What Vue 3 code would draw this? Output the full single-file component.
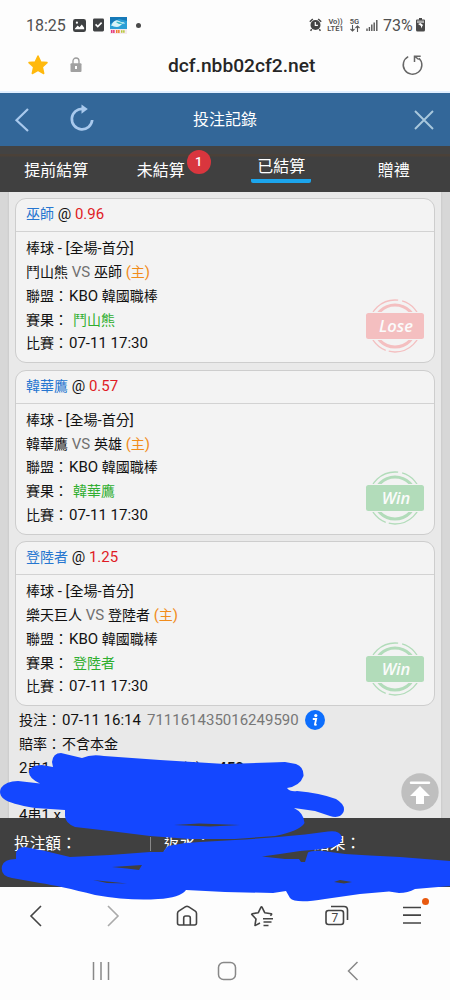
<script setup>
const tabs = [
  { label: '提前結算' },
  { label: '未結算', badge: 1 },
  { label: '已結算', active: true },
  { label: '贈禮' }
]
const bets = [
  { pick: '巫師', odds: '0.96', away: '鬥山熊', home: '巫師', result: '鬥山熊', status: 'Lose' },
  { pick: '韓華鷹', odds: '0.57', away: '韓華鷹', home: '英雄', result: '韓華鷹', status: 'Win' },
  { pick: '登陸者', odds: '1.25', away: '樂天巨人', home: '登陸者', result: '登陸者', status: 'Win' }
]
</script>

<template>
  <div class="phone">
    <div class="status">
      <span class="time">18:25</span>
      <svg class="s-img" width="13" height="13" viewBox="0 0 14 14"><rect width="14" height="14" rx="2.5" fill="#3f4143" /><path d="M2 10.5 5 7l2 2 2.5-3L12 9.5v1.5H2z" fill="#fff" /><circle cx="4.2" cy="4" r="1.2" fill="#fff" /></svg>
      <svg class="s-chk" width="11" height="14" viewBox="0 0 12 14"><rect width="12" height="14" rx="1.5" fill="#3f4143" /><path d="m2.8 6.3 2.4 2.5 4.2-4.4" fill="none" stroke="#fff" stroke-width="1.7" /></svg>
      <svg class="s-app" width="17" height="17" viewBox="0 0 17 17"><rect width="17" height="12" fill="#2c9fd6" /><path d="M0 0h17v4L9 2 0 7z" fill="#1679b8" /><path d="M1 9c2-5 5-7 8-5s5 0 6 3c-3-2-4 3-8 3S3 8 1 9z" fill="#d9f3f8" /><path d="M6 5c3-1 4 1 7 1-2 2-5 1-7-1z" fill="#38b9c6" /><rect y="12" width="17" height="5" fill="#f5e9ee" /><path d="M1 14.5h4" stroke="#e6397d" stroke-width="3" stroke-dasharray="1.5 .6" /><path d="M6 14.5h4" stroke="#f07f2d" stroke-width="3" stroke-dasharray="1.5 .6" /><path d="M11 14.5h4" stroke="#b6c936" stroke-width="2.5" stroke-dasharray="1.5 .6" /></svg>
      <i class="dot"></i>
      <span class="grow"></span>
      <svg width="13" height="14" viewBox="0 0 13 14"><circle cx="6.5" cy="7" r="5" fill="#444" /><path d="M.8 3.8 3.8 1M12.2 3.8 9.2 1M2.8 11.2l-1.3 1.5M10.2 11.2l1.3 1.5" stroke="#444" stroke-width="1.5" /><path d="M6.3 4v3.4h2.6" fill="none" stroke="#fff" stroke-width="1.2" /></svg>
      <span class="net lte"><b>Vo))</b><b>LTE1</b></span>
      <span class="net g5"><b>5G</b><svg width="10" height="7" viewBox="0 0 10 7"><path d="M2.5 0v6M.5 4l2 2 2-2M7.5 7V1M5.5 3l2-2 2 2" fill="none" stroke="#555" stroke-width="1.1" /></svg></span>
      <svg class="s-sig" width="12" height="13" viewBox="0 0 12 13"><path d="M1 12V9.5M3.4 12V8M5.8 12V5.5M8.2 12V3.5M10.8 12V1" stroke="#555" stroke-width="1.4" /></svg>
      <span class="pct">73%</span>
      <svg class="s-bat" width="9" height="14" viewBox="0 0 9 14"><path d="M3 0h3v1.5h2Q9 1.5 9 2.5V12q0 1.5-1.5 1.5h-6Q0 13.5 0 12V2.5Q0 1.5 1 1.5h2z" fill="#4a4a4a" /><path d="M1 2.5h7V5H1z" fill="#aaa" /><path d="m2 6 2.5-1 2.5 2-2 3.5V8z" fill="#fff" /></svg>
    </div>

    <div class="address">
      <svg class="a-star" width="22" height="22" viewBox="0 0 22 22"><path d="m11 2 2.7 5.9 6.3.7-4.7 4.4 1.4 6.5L11 16.3l-5.7 3.2L6.7 13 2 8.6l6.3-.7z" fill="#ffb90d" stroke="#ffb90d" stroke-width="1.5" stroke-linejoin="round" /></svg>
      <svg class="a-lock" width="12" height="16" viewBox="0 0 12 16"><path d="M3 7V4a3 3 0 0 1 6 0v3" fill="none" stroke="#9b9b9b" stroke-width="1.3" /><rect x=".5" y="6.3" width="11" height="8.7" rx="1" fill="#a1a1a1" /><path d="M5 9h2v3H5z" fill="#fff" /></svg>
      <span class="url">dcf.nbb02cf2.net</span>
      <svg class="a-rel" width="24" height="24" viewBox="0 0 24 24"><path d="M8.2 3.7A9.300 9.300 0 1 0 19 5.200M14.5 9V3.2h6.2M15 3.5l3.7 3" fill="none" stroke="#666" stroke-width="1.5" /></svg>
    </div>

    <header class="title">
      <svg class="t-back" width="16" height="26" viewBox="0 0 16 26"><path d="M14 2 2.5 13.2 14 24" fill="none" stroke="#a9c9ed" stroke-width="2.2" /></svg>
      <svg class="t-re" width="26" height="28" viewBox="0 0 26 28"><path d="M14 5a10.2 10.2 0 1 0 9.2 11" fill="none" stroke="#a9c9ed" stroke-width="2.7" /><path d="m12.5.5 6.3 4.6-6.3 4.6z" fill="#a9c9ed" /></svg>
      <h1>投注記錄</h1>
      <svg class="t-x" width="22" height="22" viewBox="0 0 22 22"><path d="m2 2 18 18M20 2 2 20" stroke="#a9c8dd" stroke-width="1.9" /></svg>
    </header>

    <nav class="tabs">
      <div v-for="t in tabs" :key="t.label" class="tab" :class="{ active: t.active }">
        <span class="tab-label">{{ t.label }}<em v-if="t.badge">{{ t.badge }}</em></span>
      </div>
    </nav>

    <main class="list">
      <div class="sheet">
        <section v-for="b in bets" :key="b.pick" class="card">
          <div class="head"><span class="pick">{{ b.pick }}</span><span class="l"> @ <span class="odds">{{ b.odds }}</span></span></div>
          <div class="body">
            <p>棒球<span class="l"> - [</span>全場<span class="l">-</span>首分<span class="l">]</span></p>
            <p>{{ b.away }}<span class="l vs"> VS </span>{{ b.home }}<span class="l host"> (</span><span class="host">主</span><span class="l host">)</span></p>
            <p><span class="key">聯盟：</span><span class="l">KBO </span>韓國職棒</p>
            <p><span class="key">賽果：</span><span class="res">{{ b.result }}</span></p>
            <p><span class="key">比賽：</span><span class="l">07-11 17:30</span></p>
            <svg class="stamp" :class="b.status.toLowerCase()" width="60" height="56" viewBox="0 0 60 56">
              <circle cx="30" cy="28" r="21" fill="none" stroke="currentColor" stroke-width="3" />
              <circle cx="30" cy="28" r="26" fill="none" stroke="currentColor" stroke-width="1.3" stroke-dasharray="47 3 31 2 42 4 30 5" />
              <rect x="0" y="14" width="60" height="28" class="gap" />
              <rect x="1" y="15" width="58" height="26" rx="2.5" fill="currentColor" />
              <text x="31" y="33.500" text-anchor="middle">{{ b.status }}</text>
            </svg>
          </div>
        </section>
        <div class="summary">
          <p><span class="key">投注：</span><span class="l">07-11 16:14</span><span class="l id">711161435016249590</span><svg width="20" height="20" viewBox="0 0 20 20"><circle cx="10" cy="10" r="10" fill="#0d6efd" /><circle cx="10.8" cy="5.6" r="1.6" fill="#fff" /><path d="M7.8 9h3.4l-1.3 5.5q0 .7 1.8 0" fill="none" stroke="#fff" stroke-width="1.8" /></svg></p>
          <p><span class="key">賠率：</span>不含本金</p>
          <p><span class="l">2</span>串<span class="l">1</span><span class="group">組<span class="l">)</span></span><b class="l">450</b></p>
          <p></p>
          <p><span class="l">4</span>串<span class="l">1 x</span></p>
        </div>
      </div>
      <svg class="top" width="38" height="38" viewBox="0 0 38 38"><circle cx="19" cy="19" r="18.7" fill="#bfbfbf" /><path d="M10 9.7h18" stroke="#fff" stroke-width="2.5" stroke-linecap="round" /><path d="m19 13 10 10h-6v8h-8v-8H9z" fill="#fff" /></svg>
    </main>

    <footer class="totals"><span>投注額：</span><span>返水：</span><span>結果：</span></footer>

    <div class="tools">
      <svg width="26" height="26" viewBox="0 0 26 26"><path d="M17 3 7 13l10 10" fill="none" stroke="#444" stroke-width="1.6" /></svg>
      <svg width="26" height="26" viewBox="0 0 26 26"><path d="m9 3 10 10L9 23" fill="none" stroke="#aaa" stroke-width="1.6" /></svg>
      <svg width="26" height="26" viewBox="0 0 26 26"><path d="M3.5 10.5Q3.5 9 4.7 8.2L11.6 3.7Q13 2.9 14.4 3.7L21.3 8.2Q22.5 9 22.5 10.5V20q0 2-2 2h-15q-2 0-2-2zM9.7 22v-7q0-2 2-2h2.6q2 0 2 2v7" fill="none" stroke="#444" stroke-width="1.6" /></svg>
      <svg width="26" height="26" viewBox="0 0 26 26"><path d="m11 20-4.5 2.4Q5.8 22.8 6 22l1-6-4-4.2Q2.2 11 3.3 10.7L9.3 9.7 12 4.2q.5-1 1 0L15.7 9.7l6.5 1q.8.2.2 1l-1 1M14 15.7h10M14.5 19h8M14.5 22.5h5" fill="none" stroke="#444" stroke-width="1.6" stroke-linejoin="round" /></svg>
      <svg width="26" height="26" viewBox="0 0 26 26"><path d="M7 3.5h13q3.5 0 3.5 3.5v10" fill="none" stroke="#444" stroke-width="1.6" /><rect x="2" y="7.5" width="17.5" height="14" rx="2.5" fill="none" stroke="#444" stroke-width="1.6" /><text x="10.8" y="18.5" text-anchor="middle" class="count">7</text></svg>
      <svg class="menu" width="26" height="26" viewBox="0 0 26 26"><path d="M4 4.5h18M4 12.2h18M4 20h18" stroke="#444" stroke-width="1.7" /><circle cx="26.5" cy="-1.5" r="3.5" fill="#e8590f" /></svg>
    </div>
    <div class="android">
      <svg width="22" height="22" viewBox="0 0 22 22"><path d="M3.5 2v18M11 2v18M18.5 2v18" stroke="#888" stroke-width="1.5" /></svg>
      <svg width="22" height="22" viewBox="0 0 22 22"><rect x="2.5" y="2.5" width="17" height="17" rx="5" fill="none" stroke="#888" stroke-width="1.5" /></svg>
      <svg width="22" height="22" viewBox="0 0 22 22"><path d="m15.5 2-9 9 9 9" fill="none" stroke="#888" stroke-width="1.5" /></svg>
    </div>

    <svg class="ink" width="450" height="1000" viewBox="0 0 450 1000">
      <path d="M52 762Q53 753 61 753L82 758Q91 754 104 756L160 760 225 764Q260 763 285 762L296 764Q304 767 303.5 776 300 786 287 788 290 792 297 791 320 793 336 799 346 805 343.5 812 340 819 330 816L315 811 294 808Q304 813 304.5 823 300 831 275 836L235 839 190 839 150 836 110 831 75 827Q65 823 65 816V810L35 808Q10 804 4 799-2 794 1 788 6 781 18 781L40 783.5Q28 778 29 771 31 765 42 765L53 767Z" />
      <path d="M16 855Q16 847 25 847L45 851 70 857 110 855 150 852 163 852 168 846 185 843 200 842 235 840Q270 838 305 834.500L328 831.500Q339 830 341.500 836 343 844 333 847L318 849.500 300 851 280 854 262 856.500 285 859 299 859 301 862 305 862 308 852.500Q312 850 323 851L345 854 370 855.500 400 857 450 861V886L415 889Q408 893 399 893L389 891.5 360 894 325 899Q295 904 290 898L286 891 273 893 225 892 186 890Q180 898 158 899 130 901 95 895 60 886 40 883L12 878Q0 876 2 866 4 859 16 859Z" />
      <g fill="#404040"><path d="m174 825 25-1.5 41 1.5-30 1.5z" /><path d="m112 867 30-2-3 5-12-1.5z" /><path d="m93 880 34 3.5-20-.5z" /><path d="m334 882 6-2 12 2-8 1.5z" /></g>
    </svg>
  </div>
</template>

<style scoped>
* { box-sizing: border-box; }
.phone { position: relative; width: 450px; height: 1000px; overflow: hidden; background: #fdfdfd; font-family: Roboto, "Noto Sans CJK TC", sans-serif; font-size: 14px; color: #111; }
svg { flex: none; overflow: visible; }
.status { display: flex; align-items: center; height: 50px; padding: 0 25px 0 26px; color: #505050; font-size: 16px; }
.time { width: 47px; }
.s-chk { margin-left: 7px; }
.s-app { margin-left: 6px; }
.dot { width: 5px; height: 5px; margin-left: 9px; border-radius: 50%; background: #4a4a4a; }
.grow { flex: 1; }
.net { display: flex; flex-direction: column; align-items: center; font-size: 7.5px; line-height: 7.5px; }
.net b { font-weight: 600; }
.lte { margin-left: 5px; width: 17px; }
.g5 { margin-left: 5px; width: 11px; }
.s-sig { margin-left: 6px; }
.pct { margin-left: 5px; width: 30px; }
.s-bat { margin-left: 3px; }
.address { display: flex; align-items: center; height: 43px; padding: 0 26px 11px; border-bottom: 2px solid #e2efff; }
.a-star { margin-left: 1px; }
.a-lock { margin-left: 21px; }
.url { flex: 1; margin-left: 86px; font-size: 19.2px; font-weight: 500; color: #262626; }
.title { display: flex; align-items: center; height: 53px; background: #336799; }
.t-back { margin-left: 14px; }
.t-re { margin-left: 39px; margin-top: -4px; }
.title h1 { flex: 1; margin: -3px 0 0 98px; font-size: 16px; font-weight: 400; color: #fff; }
.t-x { margin-right: 15px; }
.tabs { display: grid; grid-template-columns: repeat(4, 1fr); height: 46px; background: linear-gradient(#434343 8px, #4b4138 8px, #4b4138 10px, #404040 11px); color: #fff; font-size: 16px; }
.tab { text-align: center; line-height: 24px; padding-top: 13px; }
.tab-label { display: inline-block; position: relative; }
.tab:nth-child(2) { padding-right: 16px; }
.active { padding-top: 8px; }
.active .tab-label { padding: 0 6px; border-bottom: 4px solid #1ca5ec; border-radius: 2px; line-height: 25px; }
.tab em { position: absolute; left: 50px; top: -9px; width: 24px; height: 24px; border-radius: 50%; background: #d9363e; font: 500 13px/24px Roboto, sans-serif; }
.list { position: relative; height: 626px; padding: 0 9px; overflow: hidden; background: #d7d7d7; }
.sheet { height: 640px; padding: 6px 6px 0; background: #e9e9e9; box-shadow: 0 0 2px #bbb; }
.card { height: 165px; margin-bottom: 6.5px; border: 1px solid #cdcdcd; border-radius: 11px; background: #f3f3f3; }
.head { height: 33px; padding-left: 10px; line-height: 31px; border-bottom: 1px solid #d2d2d2; white-space: pre; }
.pick { color: #2676d0; }
.odds { color: #e01b25; }
.l { font-size: 15px; white-space: pre; }
.key { display: inline-block; width: 43px; }
.body { position: relative; padding: 5.3px 10px; }
p { margin: 0; height: 23.8px; line-height: 23.8px; white-space: nowrap; }
.vs { color: #707070; }
.host { color: #f18c1b; }
.res { margin-left: 4px; color: #2fae2f; }
.stamp { position: absolute; right: 9px; top: 66px; }
.stamp .gap { fill: #f3f3f3; }
.stamp text { fill: #fbfbfb; font: italic 600 16.5px "Open Sans", sans-serif; }
.lose { color: #f4bfc0; }
.win { color: #b2dcba; }
.summary { padding-left: 4px; margin-top: -3.5px; }
.summary svg { margin-left: 6px; vertical-align: middle; position: relative; top: -1px; }
.id { margin-left: 6px; color: #777; }
.group { margin-left: 132px; margin-right: 17px; }
.top { position: absolute; right: 11px; top: 581px; }
.totals { display: grid; grid-template-columns: 150px 150px 150px; align-items: center; height: 69px; padding-bottom: 17px; background: #404040; color: #fff; font-size: 15.7px; }
.totals span { padding-left: 13px; line-height: 14px; border-left: 1px solid #888; }
.totals span:first-child { border-color: transparent; }
.tools { display: flex; justify-content: space-between; padding: 16px 25px 0 24px; height: 58px; }
.count { font: 12px Roboto, sans-serif; fill: #444; }
.android { display: flex; justify-content: space-between; padding: 15px 86px 0 90px; }
.ink { position: absolute; inset: 0; fill: #1447ff; pointer-events: none; }
</style>

<style>
body { background: #fdfdfd; }
</style>
